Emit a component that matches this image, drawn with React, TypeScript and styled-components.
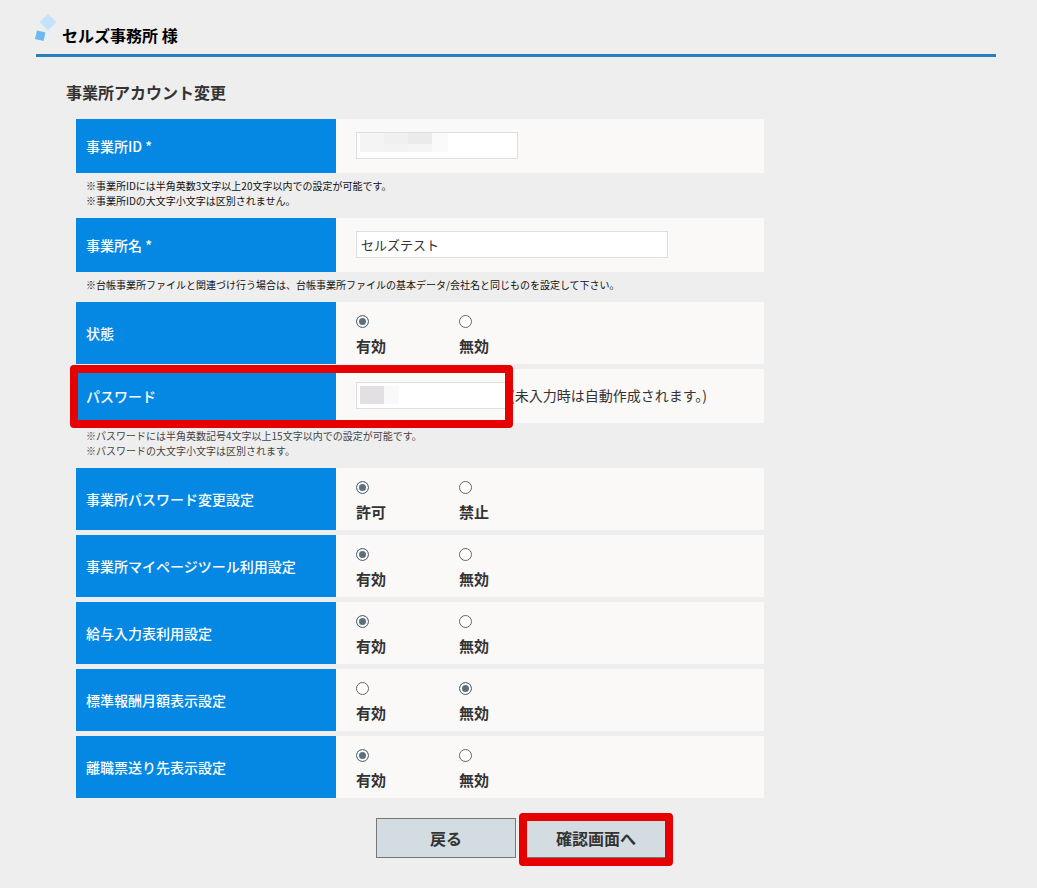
import React, { useState } from "react";
import styled, { createGlobalStyle } from "styled-components";

const settings = [
  { id: "change", label: "事業所パスワード変更設定", options: ["許可", "禁止"], initial: 0 },
  { id: "mypage", label: "事業所マイページツール利用設定", options: ["有効", "無効"], initial: 0 },
  { id: "salary", label: "給与入力表利用設定", options: ["有効", "無効"], initial: 0 },
  { id: "monthly", label: "標準報酬月額表示設定", options: ["有効", "無効"], initial: 1 },
  { id: "leaving", label: "離職票送り先表示設定", options: ["有効", "無効"], initial: 0 },
];

interface RadioRowProps {
  id: string;
  label: string;
  options: string[];
  initial: number;
}

const RadioRow: React.FC<RadioRowProps> = ({ id, label, options, initial }) => {
  const [selected, setSelected] = useState(initial);

  return (
    <Row>
      <RowTitle id={`${id}-title`}>{label}</RowTitle>
      <Options role="radiogroup" aria-labelledby={`${id}-title`}>
        {options.map((option, index) => (
          <Option key={option}>
            <Radio
              type="radio"
              name={id}
              checked={selected === index}
              onChange={() => setSelected(index)}
            />
            {option}
          </Option>
        ))}
      </Options>
    </Row>
  );
};

const App: React.FC = () => {
  const [name, setName] = useState("セルズテスト");

  return (
    <>
      <GlobalStyle />
      <Page>
        <Header>
          <Logo width="24" height="32" viewBox="0 0 24 32" aria-hidden="true">
            <path d="M12 2 L20.5 10 L12 18.5 L3.5 10 Z" fill="#c4e3fb" />
            <path d="M1 18.5 L9.5 20.5 L7.5 29 L-1 27 Z" fill="#6bb8f2" />
          </Logo>
          <OfficeName>セルズ事務所 様</OfficeName>
        </Header>
        <Main>
          <Title>事業所アカウント変更</Title>
          <Form onSubmit={(e) => e.preventDefault()}>
            <Row>
              <RowLabel htmlFor="office-id">事業所ID *</RowLabel>
              <Field>
                <InputWrap>
                  <TextInput id="office-id" type="text" $width={162} />
                  <IdMask>
                    <Tile $color="#f4f4f4" />
                    <Tile $color="#f0f0f0" />
                    <Tile $color="#ebebeb" />
                    <Tile $color="#fafafa" />
                    <Tile $color="#f4f4f4" />
                    <Tile $color="#f3f3f3" />
                    <Tile $color="#f5f5f5" />
                    <Tile $color="#fafafa" />
                  </IdMask>
                </InputWrap>
              </Field>
            </Row>
            <Note>
              ※事業所IDには半角英数3文字以上20文字以内での設定が可能です。
              <br />
              ※事業所IDの大文字小文字は区別されません。
            </Note>
            <Row>
              <RowLabel htmlFor="office-name">事業所名 *</RowLabel>
              <Field>
                <TextInput
                  id="office-name"
                  type="text"
                  $width={312}
                  value={name}
                  onChange={(e) => setName(e.target.value)}
                />
              </Field>
            </Row>
            <Note>
              ※台帳事業所ファイルと関連づけ行う場合は、台帳事業所ファイルの基本データ/会社名と同じものを設定して下さい。
            </Note>
            <Rows>
              <RadioRow id="status" label="状態" options={["有効", "無効"]} initial={0} />
              <Row>
                <RowLabel htmlFor="password">パスワード</RowLabel>
                <Field>
                  <InputWrap>
                    <TextInput id="password" type="password" $width={152} />
                    <PasswordMask>
                      <Tile $color="#e2e0e2" />
                      <Tile $color="#f9f9fa" />
                    </PasswordMask>
                  </InputWrap>
                  <Hint>(未入力時は自動作成されます。)</Hint>
                </Field>
                <PasswordFrame />
              </Row>
            </Rows>
            <Note $light>
              ※パスワードには半角英数記号4文字以上15文字以内での設定が可能です。
              <br />
              ※パスワードの大文字小文字は区別されます。
            </Note>
            <Rows>
              {settings.map((setting) => (
                <RadioRow key={setting.id} {...setting} />
              ))}
            </Rows>
            <Actions>
              <Button type="button">戻る</Button>
              <ButtonWrap>
                <Button type="submit">確認画面へ</Button>
                <ButtonFrame />
              </ButtonWrap>
            </Actions>
          </Form>
        </Main>
      </Page>
    </>
  );
};

export default App;

const GlobalStyle = createGlobalStyle`
  * {
    box-sizing: border-box;
  }

  body {
    margin: 0;
    background-color: #eeeeee;
    color: #333333;
    font-family: "Noto Sans CJK JP", "Noto Sans", sans-serif;
  }
`;

const Page = styled.div`
  padding: 12px 41px 22px 36px;
`;

const Header = styled.header`
  display: flex;
  align-items: flex-start;
  gap: 2px;
  height: 45px;
  border-bottom: 3px solid #2a7fbb;
`;

const Logo = styled.svg`
  overflow: visible;
`;

const OfficeName = styled.div`
  padding-top: 11px;
  font-size: 16px;
  line-height: 24px;
  font-weight: 700;
  color: #000000;
`;

const Main = styled.main`
  padding: 23px 30px 0;
`;

const Title = styled.h1`
  margin: 0 0 15px;
  font-size: 16px;
  line-height: 24px;
  font-weight: 700;
`;

const Form = styled.form`
  max-width: 698px;
  padding-left: 10px;
`;

const Rows = styled.div`
  display: flex;
  flex-direction: column;
  gap: 5px;
`;

const Row = styled.div`
  position: relative;
  display: grid;
  grid-template-columns: 260px 1fr;
  min-height: 54px;
  background-color: #faf9f8;
`;

const RowTitle = styled.div`
  display: flex;
  align-items: center;
  padding: 0 10px;
  background-color: #0488e4;
  color: #ffffff;
  font-size: 14px;
  line-height: 20px;
  font-weight: 500;
`;

const RowLabel = styled(RowTitle).attrs({ as: "label" })<{ htmlFor: string }>``;

const Field = styled.div`
  display: flex;
  align-items: center;
  padding: 0 20px 1px;
`;

const InputWrap = styled.div`
  position: relative;
  display: flex;
`;

const TextInput = styled.input<{ $width: number }>`
  width: ${(props) => props.$width}px;
  height: 27px;
  padding: 0 4px;
  border: 1px solid #dddfe2;
  background-color: #ffffff;
  color: #333333;
  font-family: inherit;
  font-size: 13px;
`;

const IdMask = styled.div`
  position: absolute;
  top: 1px;
  left: 4px;
  display: grid;
  grid-template-columns: 24px 24px 24px 16px;
  grid-template-rows: 11px 8px;
  pointer-events: none;
`;

const PasswordMask = styled.div`
  position: absolute;
  top: 4px;
  left: 4px;
  display: grid;
  grid-template-columns: 24px 15px;
  grid-template-rows: 18px;
  pointer-events: none;
`;

const Tile = styled.span<{ $color: string }>`
  background-color: ${(props) => props.$color};
`;

const Hint = styled.span`
  padding: 0 0 2px 2px;
  font-size: 14px;
  line-height: 20px;
`;

const Note = styled.p<{ $light?: boolean }>`
  margin: 0;
  padding: 5px 10px 10px;
  color: ${(props) => (props.$light ? "#444444" : "#111111")};
  font-size: 10px;
  line-height: 15px;
`;

const Options = styled.div`
  display: flex;
  padding: 13px 20px 6px;
`;

const Option = styled.label`
  display: flex;
  flex-direction: column;
  gap: 6px;
  width: 103px;
  font-size: 15px;
  line-height: 24px;
  font-weight: 700;
`;

const Radio = styled.input`
  appearance: none;
  width: 13px;
  height: 13px;
  margin: 0;
  border: 1px solid #666666;
  border-radius: 50%;
  background-color: #ffffff;

  &:checked {
    border-color: #5c6f7d;
    background-color: #5c6f7d;
    box-shadow: inset 0 0 0 2px #ffffff;
  }
`;

const Frame = styled.div`
  position: absolute;
  border: 8px solid #e60000;
  border-radius: 4px;
  pointer-events: none;
`;

const PasswordFrame = styled(Frame)`
  top: -4px;
  bottom: -5px;
  left: -6px;
  width: 443px;
`;

const ButtonFrame = styled(Frame)`
  top: -5px;
  right: -7px;
  bottom: -8px;
  left: -7px;
`;

const Actions = styled.div`
  display: flex;
  gap: 10px;
  padding: 20px 0 0 300px;
`;

const ButtonWrap = styled.div`
  position: relative;
`;

const Button = styled.button`
  width: 140px;
  height: 40px;
  padding: 0;
  border: 1px solid #777777;
  background-color: #d3dce1;
  color: #333333;
  font-family: inherit;
  font-size: 16px;
  font-weight: 700;
  cursor: pointer;
`;
